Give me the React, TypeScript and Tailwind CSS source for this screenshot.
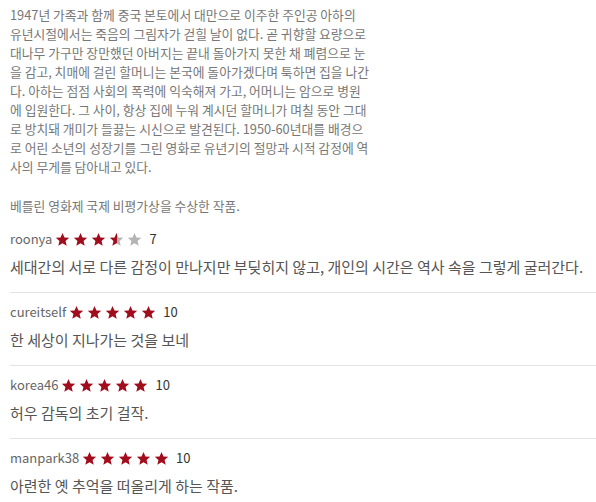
const synopsis = [
  "1947년 가족과 함께 중국 본토에서 대만으로 이주한 주인공 아하의",
  "유년시절에서는 죽음의 그림자가 걷힐 날이 없다. 곧 귀향할 요량으로",
  "대나무 가구만 장만했던 아버지는 끝내 돌아가지 못한 채 폐렴으로 눈",
  "을 감고, 치매에 걸린 할머니는 본국에 돌아가겠다며 툭하면 집을 나간",
  "다. 아하는 점점 사회의 폭력에 익숙해져 가고, 어머니는 암으로 병원",
  "에 입원한다. 그 사이, 항상 집에 누워 계시던 할머니가 며칠 동안 그대",
  "로 방치돼 개미가 들끓는 시신으로 발견된다. 1950-60년대를 배경으",
  "로 어린 소년의 성장기를 그린 영화로 유년기의 절망과 시적 감정에 역",
  "사의 무게를 담아내고 있다.",
];

const reviews = [
  { name: "roonya", score: 7, text: "세대간의 서로 다른 감정이 만나지만 부딪히지 않고, 개인의 시간은 역사 속을 그렇게 굴러간다." },
  { name: "cureitself", score: 10, text: "한 세상이 지나가는 것을 보네" },
  { name: "korea46", score: 10, text: "허우 감독의 초기 걸작." },
  { name: "manpark38", score: 10, text: "아련한 옛 추억을 떠올리게 하는 작품." },
];

const STAR = "M12 1.5l3.1 7.2 7.6.6-5.8 5 1.8 7.5L12 17.8l-6.7 4 1.8-7.5-5.8-5 7.6-.6z";

const Star = ({ fill }: { fill: "full" | "half" | "empty" }) => (
  <svg viewBox="0 0 24 24" className="w-[15px] h-[15px]">
    <defs>
      <linearGradient id="half" x1="0" x2="1" y1="0" y2="0">
        <stop offset="50%" stopColor="#a10d1c" />
        <stop offset="50%" stopColor="#b4b4b4" />
      </linearGradient>
    </defs>
    <path
      d={STAR}
      fill={fill === "full" ? "#a10d1c" : fill === "half" ? "url(#half)" : "#b4b4b4"}
    />
  </svg>
);

const Stars = ({ score }: { score: number }) => {
  const items = [0, 1, 2, 3, 4].map((i) => {
    const v = score - i * 2;
    return v >= 2 ? "full" : v === 1 ? "half" : "empty";
  });
  return (
    <div className="flex items-center gap-[3px]">
      {items.map((f, i) => (
        <Star key={i} fill={f as "full" | "half" | "empty"} />
      ))}
    </div>
  );
};

export default function App() {
  return (
    <div
      className="w-[596px] h-[502px] overflow-hidden bg-white pl-[10px] pt-[5px]"
      style={{ fontFamily: '"Noto Sans CJK KR", "Noto Sans", sans-serif' }}
    >
      <div className="text-[12.8px] leading-[19px] text-[#777] whitespace-nowrap">
        {synopsis.map((l, i) => (
          <div key={i}>{l}</div>
        ))}
      </div>
      <p className="mt-[20px] text-[12.8px] leading-[19px] text-[#777]">베를린 영화제 국제 비평가상을 수상한 작품.</p>

      <div className="mt-[5px]">
        {reviews.map((r, i) => (
          <div
            key={r.name}
            className={i < reviews.length - 1 ? "pt-[9px] pb-[14px] border-b border-[#e4e4e4]" : "pt-[9px]"}
          >
            <div className="flex items-center h-5 gap-[3px]">
              <span className="text-[13px] text-[#666]">{r.name}</span>
              <Stars score={r.score} />
              <span className="ml-[4px] text-[13px] text-[#333]">{r.score}</span>
            </div>
            <p className="mt-[7px] h-[22px] text-[15px] leading-[22px] text-[#555] whitespace-nowrap">{r.text}</p>
          </div>
        ))}
      </div>
    </div>
  );
}
